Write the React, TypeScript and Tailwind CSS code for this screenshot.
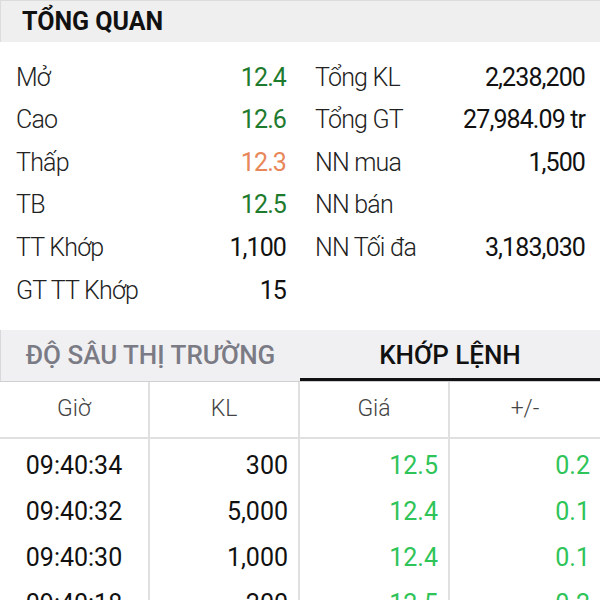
import React from 'react';

type Stat = { label: string; value: string; color?: string };

const leftStats: Stat[] = [
  { label: 'Mở', value: '12.4', color: 'text-[#1e7b2e]' },
  { label: 'Cao', value: '12.6', color: 'text-[#1e7b2e]' },
  { label: 'Thấp', value: '12.3', color: 'text-[#e8875a]' },
  { label: 'TB', value: '12.5', color: 'text-[#1e7b2e]' },
  { label: 'TT Khớp', value: '1,100' },
  { label: 'GT TT Khớp', value: '15' },
];

const rightStats: Stat[] = [
  { label: 'Tổng KL', value: '2,238,200' },
  { label: 'Tổng GT', value: '27,984.09 tr' },
  { label: 'NN mua', value: '1,500' },
  { label: 'NN bán', value: '' },
  { label: 'NN Tối đa', value: '3,183,030' },
];

const trades = [
  { time: '09:40:34', vol: '300', price: '12.5', change: '0.2' },
  { time: '09:40:32', vol: '5,000', price: '12.4', change: '0.1' },
  { time: '09:40:30', vol: '1,000', price: '12.4', change: '0.1' },
  { time: '09:40:18', vol: '200', price: '12.5', change: '0.2' },
];

const StatColumn: React.FC<{ items: Stat[]; className: string }> = ({ items, className }) => (
  <div className={`flex flex-col ${className}`}>
    {items.map((s) => (
      <div key={s.label} className="flex h-[42.6px] items-center justify-between">
        <span className="font-light tracking-[-0.8px] text-[#222]">{s.label}</span>
        <span className={`tracking-[-0.9px] ${s.color ?? 'text-[#111]'}`}>{s.value}</span>
      </div>
    ))}
  </div>
);

export default function App() {
  const cell = 'flex h-[46px] items-center';
  return (
    <div
      className="h-[600px] w-[600px] overflow-hidden bg-white"
      style={{ fontFamily: 'Roboto, "Noto Sans", sans-serif' }}
    >
      <div className="flex h-[42px] items-center border-l border-t border-[#dcdcdc] bg-[#efefef] pl-[21px]">
        <span className="text-[25px] font-bold text-[#111]">TỔNG QUAN</span>
      </div>

      <div className="flex pt-[14px] text-[25px]">
        <StatColumn items={leftStats} className="w-[300px] pl-[16px] pr-[14px]" />
        <StatColumn items={rightStats} className="w-[300px] pl-[15px] pr-[15px]" />
      </div>

      <div className="mt-[18px] flex h-[52px] border-b border-[#cfcfd2] bg-[#f0f0f2]">
        <div className="flex w-[300px] items-center justify-center border-l border-[#d8d8dc] text-[26px] font-medium text-[#7b7b85]">
          ĐỘ SÂU THỊ TRƯỜNG
        </div>
        <div className="flex w-[300px] items-center justify-center border-b-[3px] border-[#111] pt-[3px] text-[26px] font-medium text-[#111]">
          KHỚP LỆNH
        </div>
      </div>

      <div className="grid grid-cols-4">
        {['Giờ', 'KL', 'Giá', '+/-'].map((h, i) => (
          <div
            key={h}
            className={`flex h-[57px] items-center justify-center border-b-2 border-[#e0e0e0] text-[23px] font-light text-[#444] ${
              i < 3 ? 'border-r-2' : ''
            }`}
          >
            {h}
          </div>
        ))}
      </div>

      <div className="grid grid-cols-4 text-[25px]">
        <div className="flex flex-col border-r-2 border-[#e0e0e0] pt-[4px] text-[#111]">
          {trades.map((t) => (
            <div key={t.time} className={`${cell} justify-center`}>{t.time}</div>
          ))}
        </div>
        <div className="flex flex-col border-r-2 border-[#e0e0e0] pr-[10px] pt-[4px] text-[#111]">
          {trades.map((t) => (
            <div key={t.time} className={`${cell} justify-end`}>{t.vol}</div>
          ))}
        </div>
        <div className="flex flex-col border-r-2 border-[#e0e0e0] pr-[10px] pt-[4px] text-[#2ec458]">
          {trades.map((t) => (
            <div key={t.time} className={`${cell} justify-end`}>{t.price}</div>
          ))}
        </div>
        <div className="flex flex-col pr-[10px] pt-[4px] text-[#2ec458]">
          {trades.map((t) => (
            <div key={t.time} className={`${cell} justify-end`}>{t.change}</div>
          ))}
        </div>
      </div>
    </div>
  );
}
